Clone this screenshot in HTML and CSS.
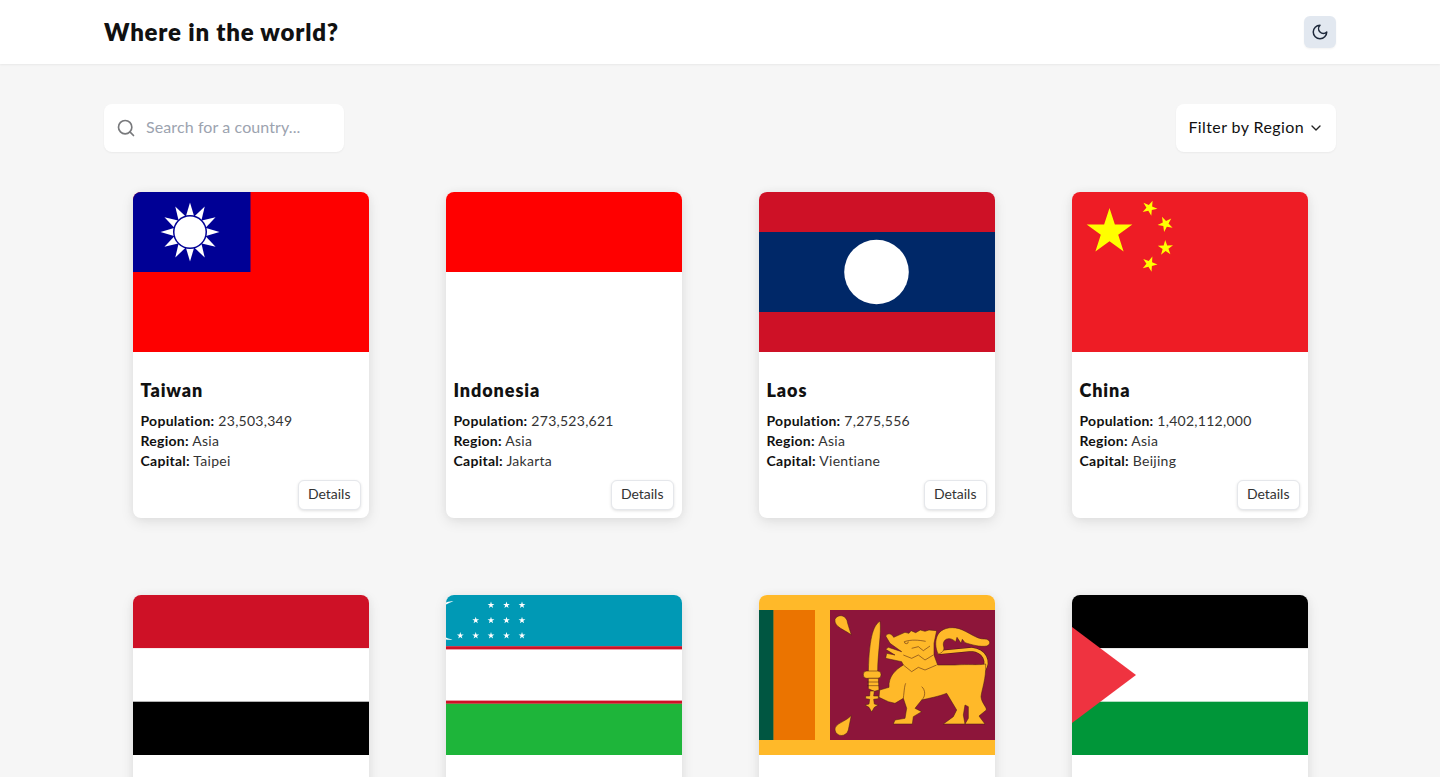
FILE: index.html
```html
<!DOCTYPE html>
<html lang="en">
<head>
  <meta charset="UTF-8" />
  <meta name="viewport" content="width=device-width, initial-scale=1.0" />
  <title>Where in the world?</title>
  <link rel="stylesheet" href="styles.css">
</head>
<body>

  <header class="topbar">
    <div class="wrap topbar-row">
      <h1>Where in the world?</h1>
      <button class="theme-btn" aria-label="Toggle theme">
        <svg width="18" height="18" viewBox="0 0 24 24" fill="none" stroke="#1e293b" stroke-width="2" stroke-linecap="round" stroke-linejoin="round"><path d="M12 3a6 6 0 0 0 9 9 9 9 0 1 1-9-9Z"/></svg>
      </button>
    </div>
  </header>

  <main class="wrap">
    <div class="toolbar">
      <label class="search">
        <svg width="20" height="20" viewBox="0 0 24 24" fill="none" stroke="#78797c" stroke-width="2" stroke-linecap="round" stroke-linejoin="round"><circle cx="11" cy="11" r="8"/><path d="m21 21-4.3-4.3"/></svg>
        <input type="text" placeholder="Search for a country...">
      </label>
      <button class="filter">
        <span class="filter-label">Filter by Region</span>
        <svg width="16" height="16" viewBox="0 0 24 24" fill="none" stroke="#222" stroke-width="2" stroke-linecap="round" stroke-linejoin="round"><path d="m6 9 6 6 6-6"/></svg>
      </button>
    </div>

    <div class="grid">

      <article class="card">
        <svg class="flag" viewBox="0 0 236 160">
          <rect width="236" height="160" fill="#fe0000"/>
          <rect width="117.5" height="80" fill="#000095"/>
          <g transform="translate(57 40)" fill="#fff">
            <polygon points="-4,-16 4,-16 0,-29.5"/>
            <polygon points="-4,-16 4,-16 0,-29.5" transform="rotate(30)"/>
            <polygon points="-4,-16 4,-16 0,-29.5" transform="rotate(60)"/>
            <polygon points="-4,-16 4,-16 0,-29.5" transform="rotate(90)"/>
            <polygon points="-4,-16 4,-16 0,-29.5" transform="rotate(120)"/>
            <polygon points="-4,-16 4,-16 0,-29.5" transform="rotate(150)"/>
            <polygon points="-4,-16 4,-16 0,-29.5" transform="rotate(180)"/>
            <polygon points="-4,-16 4,-16 0,-29.5" transform="rotate(210)"/>
            <polygon points="-4,-16 4,-16 0,-29.5" transform="rotate(240)"/>
            <polygon points="-4,-16 4,-16 0,-29.5" transform="rotate(270)"/>
            <polygon points="-4,-16 4,-16 0,-29.5" transform="rotate(300)"/>
            <polygon points="-4,-16 4,-16 0,-29.5" transform="rotate(330)"/>
            <circle r="17" fill="#000095"/>
            <circle r="15.500"/>
          </g>
        </svg>
        <div class="card-body">
          <h2>Taiwan</h2>
          <p><b>Population:</b> 23,503,349</p>
          <p><b>Region:</b> Asia</p>
          <p><b>Capital:</b> Taipei</p>
          <div class="card-actions"><button class="details">Details</button></div>
        </div>
      </article>

      <article class="card">
        <svg class="flag" viewBox="0 0 236 160">
          <rect width="236" height="160" fill="#fff"/>
          <rect width="236" height="80" fill="#ff0000"/>
        </svg>
        <div class="card-body">
          <h2>Indonesia</h2>
          <p><b>Population:</b> 273,523,621</p>
          <p><b>Region:</b> Asia</p>
          <p><b>Capital:</b> Jakarta</p>
          <div class="card-actions"><button class="details">Details</button></div>
        </div>
      </article>

      <article class="card">
        <svg class="flag" viewBox="0 0 236 160">
          <rect width="236" height="160" fill="#ce1126"/>
          <rect y="40" width="236" height="80" fill="#002868"/>
          <circle cx="117.5" cy="80" r="32.3" fill="#fff"/>
        </svg>
        <div class="card-body">
          <h2>Laos</h2>
          <p><b>Population:</b> 7,275,556</p>
          <p><b>Region:</b> Asia</p>
          <p><b>Capital:</b> Vientiane</p>
          <div class="card-actions"><button class="details">Details</button></div>
        </div>
      </article>

      <article class="card">
        <svg class="flag" viewBox="0 0 236 160">
          <defs>
            <polygon id="star" points="0,-1 .2245,-.309 .951,-.309 .363,.118 .588,.809 0,.382 -.588,.809 -.363,.118 -.951,-.309 -.2245,-.309"/>
          </defs>
          <rect width="236" height="160" fill="#ee1c25"/>
          <g fill="#ffff00">
            <use href="#star" transform="translate(37.5 40) scale(24)"/>
            <use href="#star" transform="translate(77.5 16) rotate(-121) scale(8)"/>
            <use href="#star" transform="translate(93.5 32) rotate(-98) scale(8)"/>
            <use href="#star" transform="translate(93.5 56) rotate(-74) scale(8)"/>
            <use href="#star" transform="translate(77.5 72) rotate(-51) scale(8)"/>
          </g>
        </svg>
        <div class="card-body">
          <h2>China</h2>
          <p><b>Population:</b> 1,402,112,000</p>
          <p><b>Region:</b> Asia</p>
          <p><b>Capital:</b> Beijing</p>
          <div class="card-actions"><button class="details">Details</button></div>
        </div>
      </article>

      <article class="card">
        <svg class="flag" viewBox="0 0 236 160">
          <rect width="236" height="53.3" fill="#ce1126"/>
          <rect y="53.3" width="236" height="53.4" fill="#fff"/>
          <rect y="106.7" width="236" height="53.3" fill="#000"/>
        </svg>
        <div class="card-body">
          <h2>Yemen</h2>
          <p><b>Population:</b> 29,825,968</p>
          <p><b>Region:</b> Asia</p>
          <p><b>Capital:</b> Sana'a</p>
          <div class="card-actions"><button class="details">Details</button></div>
        </div>
      </article>

      <article class="card">
        <svg class="flag" viewBox="0 0 236 160">
          <rect width="236" height="160" fill="#fff"/>
          <rect width="236" height="51.2" fill="#0099b5"/>
          <rect y="51.2" width="236" height="3.2" fill="#ce1126"/>
          <rect y="105.6" width="236" height="3.2" fill="#ce1126"/>
          <rect y="108.8" width="236" height="51.2" fill="#1eb53a"/>
          <path d="M0 7.5 C3 6.5 5 6.3 7.5 6.3 C5 7.2 2 8.5 0 9.5 Z M0 42.5 C2 43.5 4 44 6.5 44.5 C4 44.8 2 44.8 0 44.5 Z" fill="#fff"/>
          <g fill="#fff">
            <use href="#star" transform="translate(45 10) scale(3.6)"/>
            <use href="#star" transform="translate(60.500 10) scale(3.6)"/>
            <use href="#star" transform="translate(76 10) scale(3.6)"/>
            <use href="#star" transform="translate(29.700 25.300) scale(3.6)"/>
            <use href="#star" transform="translate(45 25.300) scale(3.6)"/>
            <use href="#star" transform="translate(60.500 25.300) scale(3.6)"/>
            <use href="#star" transform="translate(76 25.300) scale(3.6)"/>
            <use href="#star" transform="translate(14.300 40.600) scale(3.6)"/>
            <use href="#star" transform="translate(29.700 40.600) scale(3.6)"/>
            <use href="#star" transform="translate(45 40.600) scale(3.6)"/>
            <use href="#star" transform="translate(60.500 40.600) scale(3.6)"/>
            <use href="#star" transform="translate(76 40.600) scale(3.6)"/>
          </g>
        </svg>
        <div class="card-body">
          <h2>Uzbekistan</h2>
          <p><b>Population:</b> 34,232,050</p>
          <p><b>Region:</b> Asia</p>
          <p><b>Capital:</b> Tashkent</p>
          <div class="card-actions"><button class="details">Details</button></div>
        </div>
      </article>

      <article class="card">
        <svg class="flag" viewBox="12 15 708 480">
          <rect x="12" y="15" width="708" height="480" fill="#ffb929"/>
          <rect x="12" y="60" width="44" height="390" fill="#005641"/>
          <rect x="56" y="60" width="124" height="390" fill="#eb7400"/>
          <rect x="225" y="60" width="495" height="390" fill="#8d153a"/>
          <path d="M548 188 L650 178 C690 182 702 215 686 240" fill="none" stroke="#4a1a14" stroke-width="13"/>
          <path d="M548 188 L650 178 C690 182 702 215 686 240" fill="none" stroke="#ffb929" stroke-width="10"/>
          <g fill="#ffb929" stroke="#4a1a14" stroke-width="1.6" stroke-linejoin="round">
            <path d="M240 88 C248 70 276 74 278 100 L289 135 C272 120 236 112 240 88 Z"/>
            <path d="M240 420 C238 400 272 396 289 376 L280 420 C274 442 244 442 240 420 Z"/>
            <path d="M550 192 C540 175 540 150 548 135 C558 116 585 108 612 116 C640 125 665 148 688 147 C706 146 710 164 695 168 C676 172 650 164 630 158 L622 148 L618 160 L606 142 L602 156 C596 150 590 146 582 146 C570 146 562 156 566 170 C570 180 560 190 550 192 Z"/>
            <path d="M392 138 C398 128 410 130 416 142 L450 127 L462 130 L468 122 L482 128 L496 120 L510 124 L522 120 L545 122 L537 160 L537 195 L548 225 L600 225 C640 222 670 226 692 222 C694 265 680 300 678 320 C680 340 695 350 694 360 L672 378 L690 402 L630 402 L640 385 L640 350 L630 345 L625 375 L630 402 L565 402 L595 380 L605 360 L575 310 C550 320 520 325 500 330 L480 355 L500 365 L475 380 L472 402 L415 402 L420 390 L450 385 L455 355 L445 325 L420 340 L400 335 L372 322 L374 300 L402 292 C400 260 420 240 445 225 L440 215 L392 205 L395 190 L420 195 L392 178 L400 172 L440 185 L405 160 Z"/>
            <path d="M375 93 C358 105 343 130 340 245 L368 245 C368 190 380 130 375 93 Z"/>
            <rect x="325" y="243" width="53" height="22" rx="10"/>
            <path d="M340 265 L370 265 L372 300 L358 304 L340 296 Z M336 276 L372 276 M336 287 L372 287"/>
            <path d="M345 303 L358 303 L356 318 L370 318 L370 326 L356 328 L358 342 L370 345 L358 352 L350 366 L342 352 L330 345 L342 342 L344 328 L332 326 L332 318 L344 318 Z"/>
            <path fill="none" d="M448 155 C470 148 490 150 512 154 M470 175 L490 170 L505 182 L525 168 M445 195 L470 205 L490 195 L510 210 L535 195 M445 225 L470 245 L490 232 L510 240 L545 225 M500 290 C512 300 512 320 500 330 M445 325 C448 300 448 290 452 280 M448 155 A6 6 0 1 0 460 155"/>
          </g>
        </svg>
        <div class="card-body">
          <h2>Sri Lanka</h2>
          <p><b>Population:</b> 21,919,000</p>
          <p><b>Region:</b> Asia</p>
          <p><b>Capital:</b> Kotte</p>
          <div class="card-actions"><button class="details">Details</button></div>
        </div>
      </article>

      <article class="card">
        <svg class="flag" viewBox="0 0 236 160">
          <rect width="236" height="53.3" fill="#000"/>
          <rect y="53.3" width="236" height="53.4" fill="#fff"/>
          <rect y="106.7" width="236" height="53.3" fill="#009639"/>
          <polygon points="0,32 64,80 0,128" fill="#ef3340"/>
        </svg>
        <div class="card-body">
          <h2>Palestine</h2>
          <p><b>Population:</b> 4,803,269</p>
          <p><b>Region:</b> Asia</p>
          <p><b>Capital:</b> Ramallah</p>
          <div class="card-actions"><button class="details">Details</button></div>
        </div>
      </article>

    </div>
  </main>

</body>
</html>
```

FILE: styles.css
```css
* { box-sizing: border-box; margin: 0; padding: 0; }
body {
  background-color: #f6f6f6;
  font-family: 'Lato', 'Noto Sans', sans-serif;
  color: #111;
}
button, input { font-family: inherit; }
.wrap {
  max-width: 1280px;
  margin: 0 auto;
  padding: 0 24px;
}
.topbar {
  background-color: #fff;
  box-shadow: 0 1px 2px rgba(0, 0, 0, 0.06);
}
.topbar-row {
  display: flex;
  align-items: center;
  justify-content: space-between;
  height: 64px;
}
h1 {
  font-size: 24px;
  font-weight: 800;
  letter-spacing: 0.8px;
  color: #111;
  padding-bottom: 2px;
}
.theme-btn {
  display: flex;
  align-items: center;
  justify-content: center;
  width: 32px;
  height: 32px;
  border: none;
  border-radius: 6px;
  background-color: #e2e8f0;
  box-shadow: 0 1px 2px rgba(0, 0, 0, 0.05);
}
.toolbar {
  display: flex;
  justify-content: space-between;
  margin: 40px 0;
}
.search {
  display: flex;
  align-items: center;
  gap: 10px;
  width: 240px;
  height: 48px;
  padding: 0 12px;
  background-color: #fff;
  border-radius: 8px;
  box-shadow: 0 1px 2px rgba(0, 0, 0, 0.05);
}
.search input {
  flex: 1;
  min-width: 0;
  padding-bottom: 3px;
  border: none;
  outline: none;
  font-size: 16px;
  letter-spacing: 0.1px;
  color: #111;
}
.search input::placeholder { color: #9ca3af; }
.filter {
  display: flex;
  align-items: center;
  gap: 4px;
  height: 48px;
  padding: 0 12px;
  border: none;
  border-radius: 8px;
  background-color: #fff;
  font-size: 16px;
  letter-spacing: 0.4px;
  color: #111;
  box-shadow: 0 1px 2px rgba(0, 0, 0, 0.05);
}
.filter-label { padding-bottom: 3px; }
.grid {
  display: grid;
  grid-template-columns: repeat(4, 1fr);
  column-gap: 20px;
  row-gap: 77px;
  justify-items: center;
}
.card {
  width: 236px;
  background-color: #fff;
  border-radius: 8px;
  overflow: hidden;
  box-shadow: 0 4px 14px rgba(0, 0, 0, 0.09), 0 0 8px rgba(0, 0, 0, 0.04);
}
.flag { display: block; width: 236px; height: 160px; }
.card-body {
  padding: 24px 8px 8px;
  font-size: 14px;
  line-height: 20px;
  letter-spacing: 0.27px;
  color: #333;
}
.card-body h2 {
  font-size: 18px;
  font-weight: 800;
  line-height: 28px;
  letter-spacing: 0.9px;
  margin-bottom: 7px;
  color: #111;
}
.card-body b { font-weight: 700; color: #111; }
.card-actions {
  display: flex;
  justify-content: flex-end;
  margin-top: 9px;
}
.details {
  height: 30px;
  padding: 0 9px 3px;
  background-color: #fff;
  border: 1px solid #e5e7eb;
  border-radius: 6px;
  font-size: 14px;
  color: #333;
  box-shadow: 0 1px 3px rgba(0, 0, 0, 0.12);
}
```
